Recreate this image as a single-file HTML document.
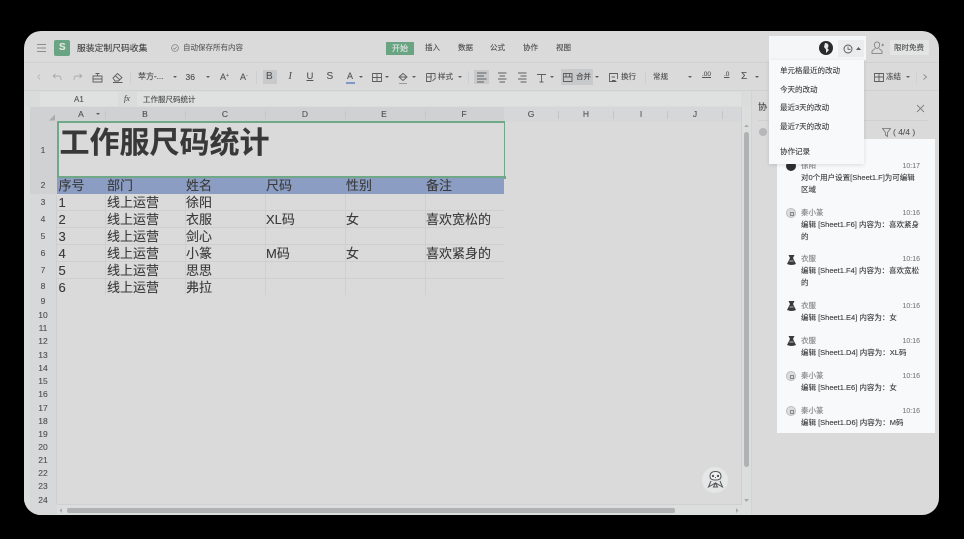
<!DOCTYPE html>
<html lang="zh">
<head>
<meta charset="utf-8">
<title>服装定制尺码收集</title>
<style>
html,body{margin:0;padding:0;background:#000;width:964px;height:539px;overflow:hidden}
body{font-family:"Liberation Sans","Noto Sans CJK SC",sans-serif;color:#444}
#root{position:absolute;left:0;top:0;width:964px;height:539px;filter:blur(.3px)}
.b{position:absolute}
.t{position:absolute;white-space:nowrap;line-height:1;-webkit-text-stroke:.12px currentColor}
.s8{font-size:7.5px;color:#4c4c4c}
.h{font-size:8.5px;color:#4f4f4f;transform:translateX(-50%)}
.r{font-size:8.5px;color:#4f4f4f;transform:translateX(-50%);left:43px}
.c{font-size:13px;color:#3a3a3a}
svg{position:absolute;overflow:visible}
.ic{fill:none;stroke:#5d5e60;stroke-width:.9}
.tri{position:absolute;width:0;height:0;border-left:2px solid transparent;border-right:2px solid transparent;border-top:2.5px solid #5d5e60}
.hl{position:absolute;left:57px;width:447px;height:1px;background:#cfcfcf}
.vl{position:absolute;top:194px;width:1px;height:101px;background:#cfcfcf}
.hs{position:absolute;top:111px;width:1px;height:8px;background:#c4c5c7}
.name{font-size:7.5px;color:#808080}
.time{font-size:7px;color:#808080;right:44px}
.desc{font-size:7.5px;color:#3a3a3a}
.qin{position:absolute;width:10px;height:10px;border-radius:50%;background:#dcdcdc;border:.5px solid #bdbdbd;box-sizing:border-box}
.qin:after{content:"";position:absolute;left:2.500px;top:2.500px;width:4px;height:4px;border:.5px solid #8a8a8a;box-sizing:border-box}
</style>
</head>
<body>
<div id="root">
<svg style="left:0;top:0" width="964" height="539">
<defs><clipPath id="w"><rect x="24" y="31" width="915" height="484" rx="17"/></clipPath></defs>
<g clip-path="url(#w)">
<rect x="24" y="31" width="915" height="484" fill="#dadada"/>
<rect x="24" y="62" width="915" height="1" fill="#d0d1d2"/>
<rect x="24" y="90" width="915" height="1" fill="#d0d1d2"/>
<rect x="24" y="91" width="728" height="16" fill="#dadbdb"/>
<rect x="24" y="107" width="33" height="408" fill="#d7d8d9"/>
<rect x="24" y="107" width="6" height="408" fill="#dcdddd"/>
<rect x="30" y="107" width="474" height="15" fill="#d0d1d3"/>
<rect x="504" y="107" width="237" height="15" fill="#d6d7d8"/>
<rect x="30" y="122" width="27" height="72" fill="#d0d1d3"/>
<rect x="57" y="504" width="695" height="11" fill="#dcdddd"/>
<rect x="741" y="107" width="11" height="408" fill="#dcdddd"/>
<rect x="741" y="107" width="1" height="397" fill="#cfd0d1"/>
<rect x="57" y="504" width="685" height="1" fill="#cfd0d1"/>
<rect x="751" y="91" width="1" height="424" fill="#d2d3d4"/>
<rect x="56" y="195" width="1" height="309" fill="#cdced0"/>
</g>
</svg>

<!-- Top bar -->
<svg style="left:37px;top:44px" width="10" height="9"><path d="M0 .5H9M0 4H9M0 7.5H9" stroke="#8b8c8e" stroke-width="1" fill="none"/></svg>
<div class="b" style="left:54px;top:40px;width:16px;height:16px;background:#6aa583;border-radius:2px"></div>
<div class="t" style="left:59px;top:43px;font-size:10px;font-weight:bold;color:#e4e6e4">S</div>
<div class="t" style="left:77px;top:43.500px;font-size:8.800px;color:#444">服装定制尺码收集</div>
<svg style="left:171px;top:44px" width="8" height="8"><circle cx="4" cy="4" r="3.400" fill="none" stroke="#858688" stroke-width=".8"/><path d="M2.300 4L3.600 5.200L5.800 2.900" fill="none" stroke="#858688" stroke-width=".8"/></svg>
<div class="t s8" style="left:183px;top:44px;color:#5e5e5e">自动保存所有内容</div>
<div class="b" style="left:386px;top:42px;width:28px;height:13px;background:#6aa583"></div>
<div class="t" style="left:392px;top:44.500px;font-size:8px;color:#e6e6e6">开始</div>
<div class="t s8" style="left:425px;top:44px">插入</div>
<div class="t s8" style="left:458px;top:44px">数据</div>
<div class="t s8" style="left:490px;top:44px">公式</div>
<div class="t s8" style="left:523px;top:44px">协作</div>
<div class="t s8" style="left:556px;top:44px">视图</div>

<!-- Toolbar highlights -->
<div class="b" style="left:263px;top:70px;width:14px;height:14px;background:#c8c9cb"></div>
<div class="b" style="left:474px;top:70px;width:15px;height:14px;background:#c8c9cb"></div>
<div class="b" style="left:561px;top:69px;width:32px;height:16px;background:#c8c9cb"></div>

<!-- Toolbar -->
<svg style="left:0;top:0" width="964" height="120" class="ic">
<path d="M40 74.500L37.800 77L40 79.500" stroke="#b4b5b6"/>
<path d="M53 76L55.500 74M53 76L55.500 78M53 76H59Q61 76 61 80" stroke="#aaabad"/>
<path d="M82 76L79.500 74M82 76L79.500 78M82 76H76Q74 76 74 80" stroke="#aaabad"/>
<path d="M93 76H102V82H93ZM97.500 76V73.500M93 79H102M95.500 73.500H99.500"/>
<path d="M113 78L117.500 73.500L122 77.500L118.500 81H115ZM115 75.500L120 80M113 82.500H122.500"/>
<path d="M130.500 71V84M256.500 71V84M468.500 71V84M645.500 71V84" stroke="#cdced0"/>
<path d="M372.500 73.500H381.500V81.500H372.500ZM377 73.500V81.500M372.500 77.500H381.500"/>
<path d="M399 77L403 73.500L407 77L403 80.500ZM399 77H407"/>
<rect x="399" y="83" width="8" height="1" fill="#9a9b9d" stroke="none"/>
<path d="M426.500 73.500H435V77M426.500 73.500V81.500H431M426.500 77H432M431 73.500V81.500M432.500 81L436 77.500"/>
<path d="M477 73H486.500M477 76H484M477 79H486.500M477 82H484"/>
<path d="M498 73H506.500M499.500 76H505M498 79H506.500M499.500 82H505"/>
<path d="M518 73H526.500M520.500 76H526.500M518 79H526.500M520.500 82H526.500"/>
<path d="M537 74.500H546M541.500 74.500V82M539.500 82H543.500"/>
<path d="M563.500 73.500H572V81.500H563.500ZM563.500 77H572M566 73.500V77M569.500 73.500V77"/>
<path d="M616.500 81.500H609.500V73.500H617.500V79M611.500 77H615M612 80.500H615.500"/>
<path d="M874.500 73.500H883.500V81.500H874.500ZM874.500 77H883.500M879 73.500V81.500"/>
<path d="M923.500 74.500L926.500 77L923.500 79.500" stroke="#8b8c8e"/>
<path d="M916.500 71V84" stroke="#d0d1d2"/>
</svg>
<div class="t" style="left:138px;top:73px;font-size:8px;color:#4c4c4c">苹方-...</div><div class="tri" style="left:173px;top:76px"></div>
<div class="t" style="left:185.500px;top:73px;font-size:8.500px;color:#4c4c4c">36</div><div class="tri" style="left:206px;top:76px"></div>
<div class="t" style="left:220px;top:72.500px;font-size:9px;color:#555">A<span style="font-size:5px;vertical-align:3px">+</span></div>
<div class="t" style="left:240px;top:72.500px;font-size:9px;color:#555">A<span style="font-size:5px;vertical-align:3px">-</span></div>
<div class="t" style="left:266px;top:72px;font-size:10px;color:#555">B</div>
<div class="t" style="left:288.500px;top:72px;font-size:10px;color:#555;font-family:'Liberation Serif',serif;font-style:italic">I</div>
<div class="t" style="left:306.500px;top:72px;font-size:9.500px;color:#555;text-decoration:underline">U</div>
<div class="t" style="left:326.500px;top:72px;font-size:10px;color:#555">S</div>
<div class="t" style="left:347px;top:71.500px;font-size:9px;color:#555">A</div>
<div class="b" style="left:346px;top:82px;width:9px;height:1.500px;background:#7f96c6"></div>
<div class="tri" style="left:359px;top:76px"></div><div class="tri" style="left:385px;top:76px"></div><div class="tri" style="left:412px;top:76px"></div>
<div class="t s8" style="left:438px;top:73px">样式</div><div class="tri" style="left:458px;top:76px"></div>
<div class="tri" style="left:550px;top:76px"></div>
<div class="t s8" style="left:576px;top:73px;color:#444">合并</div><div class="tri" style="left:595px;top:76px"></div>
<div class="t s8" style="left:621px;top:73px">换行</div>
<div class="t s8" style="left:653px;top:73px">常规</div><div class="tri" style="left:688px;top:76px"></div>
<div class="t" style="left:702px;top:72px;font-size:6.500px;color:#555;text-decoration:underline">.00</div>
<div class="t" style="left:724px;top:72px;font-size:6.500px;color:#555;text-decoration:underline">.0</div>
<div class="t" style="left:741px;top:72px;font-size:10px;color:#555">Σ</div><div class="tri" style="left:755px;top:76px"></div>
<div class="t s8" style="left:886px;top:73px">冻结</div><div class="tri" style="left:906px;top:76px"></div>

<!-- Formula bar -->
<div class="b" style="left:40px;top:92px;width:78px;height:14px;background:#dfe0e0"></div>
<div class="t" style="left:74px;top:95.500px;font-size:8px;color:#555">A1</div>
<div class="t" style="left:124px;top:95px;font-size:8px;color:#555;font-family:'Liberation Serif',serif;font-style:italic">fx</div>
<div class="b" style="left:137px;top:92px;width:604px;height:14px;background:#dfe0e0"></div>
<div class="t s8" style="left:143px;top:95.500px">工作服尺码统计</div>

<!-- Column headers -->
<svg style="left:49px;top:114px" width="7" height="7"><path d="M0 6.500L6 .5V6.500Z" fill="#a9aaac"/></svg>
<div class="hs" style="left:105px"></div><div class="hs" style="left:185px"></div><div class="hs" style="left:265px"></div><div class="hs" style="left:345px"></div><div class="hs" style="left:425px"></div><div class="hs" style="left:558px"></div><div class="hs" style="left:613px"></div><div class="hs" style="left:667px"></div><div class="hs" style="left:722px"></div>
<div class="t h" style="left:81px;top:110px">A</div><div class="tri" style="left:96px;top:113px"></div>
<div class="t h" style="left:145px;top:110px">B</div>
<div class="t h" style="left:225px;top:110px">C</div>
<div class="t h" style="left:305px;top:110px">D</div>
<div class="t h" style="left:384px;top:110px">E</div>
<div class="t h" style="left:464px;top:110px">F</div>
<div class="t h" style="left:531px;top:110px">G</div>
<div class="t h" style="left:586px;top:110px">H</div>
<div class="t h" style="left:641px;top:110px">I</div>
<div class="t h" style="left:695px;top:110px">J</div>

<!-- Row headers -->
<div class="t r" style="top:146px">1</div><div class="t r" style="top:181px">2</div><div class="t r" style="top:197.500px">3</div>
<div class="t r" style="top:214.500px">4</div><div class="t r" style="top:231.500px">5</div><div class="t r" style="top:248.500px">6</div>
<div class="t r" style="top:265.500px">7</div><div class="t r" style="top:282px">8</div><div class="t r" style="top:297px">9</div>
<div class="t r" style="top:311px">10</div><div class="t r" style="top:324px">11</div><div class="t r" style="top:337px">12</div>
<div class="t r" style="top:351px">13</div><div class="t r" style="top:364px">14</div><div class="t r" style="top:377px">15</div>
<div class="t r" style="top:390px">16</div><div class="t r" style="top:404px">17</div><div class="t r" style="top:417px">18</div>
<div class="t r" style="top:430px">19</div><div class="t r" style="top:443px">20</div><div class="t r" style="top:456px">21</div>
<div class="t r" style="top:469px">22</div><div class="t r" style="top:482px">23</div><div class="t r" style="top:496px">24</div>

<!-- Grid -->
<div class="b" style="left:57px;top:178px;width:447px;height:16px;background:#8b9dc3"></div>
<div class="hl" style="top:210px"></div><div class="hl" style="top:227px"></div><div class="hl" style="top:244px"></div><div class="hl" style="top:261px"></div><div class="hl" style="top:278px"></div>
<div class="vl" style="left:105px"></div><div class="vl" style="left:185px"></div><div class="vl" style="left:265px"></div><div class="vl" style="left:345px"></div><div class="vl" style="left:425px"></div>
<div class="b" style="left:57px;top:121px;width:445px;height:53px;border:2px solid #6fa988;border-right-width:1.500px"></div>
<div class="b" style="left:503px;top:175.500px;width:3px;height:3px;background:#6fa988"></div>
<div class="t" style="left:59.500px;top:129px;font-size:30px;font-weight:bold;color:#383838">工作服尺码统计</div>

<div class="t c" style="left:58.500px;top:179px">序号</div><div class="t c" style="left:107px;top:179px">部门</div><div class="t c" style="left:186px;top:179px">姓名</div><div class="t c" style="left:266px;top:179px">尺码</div><div class="t c" style="left:346px;top:179px">性别</div><div class="t c" style="left:426px;top:179px">备注</div>
<div class="t c" style="left:58.500px;top:195.500px">1</div><div class="t c" style="left:107px;top:195.500px">线上运营</div><div class="t c" style="left:186px;top:195.500px">徐阳</div>
<div class="t c" style="left:58.500px;top:212.500px">2</div><div class="t c" style="left:107px;top:212.500px">线上运营</div><div class="t c" style="left:186px;top:212.500px">衣服</div><div class="t c" style="left:266px;top:212.500px">XL码</div><div class="t c" style="left:346px;top:212.500px">女</div><div class="t c" style="left:426px;top:212.500px">喜欢宽松的</div>
<div class="t c" style="left:58.500px;top:229.500px">3</div><div class="t c" style="left:107px;top:229.500px">线上运营</div><div class="t c" style="left:186px;top:229.500px">剑心</div>
<div class="t c" style="left:58.500px;top:246.500px">4</div><div class="t c" style="left:107px;top:246.500px">线上运营</div><div class="t c" style="left:186px;top:246.500px">小篆</div><div class="t c" style="left:266px;top:246.500px">M码</div><div class="t c" style="left:346px;top:246.500px">女</div><div class="t c" style="left:426px;top:246.500px">喜欢紧身的</div>
<div class="t c" style="left:58.500px;top:263.500px">5</div><div class="t c" style="left:107px;top:263.500px">线上运营</div><div class="t c" style="left:186px;top:263.500px">思思</div>
<div class="t c" style="left:58.500px;top:280.500px">6</div><div class="t c" style="left:107px;top:280.500px">线上运营</div><div class="t c" style="left:186px;top:280.500px">弗拉</div>

<!-- Scrollbars -->
<div class="b" style="left:744px;top:132px;width:5px;height:335px;background:#b0b1b3;border-radius:2.500px"></div>
<div class="b" style="left:67px;top:508px;width:608px;height:4.500px;background:#b0b1b3;border-radius:2px"></div>
<svg style="left:0;top:0" width="964" height="539"><path d="M744 127L746.500 124.500L749 127ZM744 499H749L746.500 502ZM62 508L59.500 510.500L62 513ZM736 508L738.500 510.500L736 513Z" fill="#a9aaac"/></svg>

<!-- Mascot -->
<div class="b" style="left:702px;top:467px;width:26px;height:26px;border-radius:50%;background:#e5e6e6"></div>
<svg style="left:707px;top:470px" width="17" height="20" fill="none" stroke="#55565a" stroke-width="1">
<path d="M3 6.500Q3 1.500 8.500 1.500Q14 1.500 14 6.500Q14 10 8.500 10Q3 10 3 6.500Z" fill="#f2f2f2"/>
<path d="M4 11L1.500 17L8.500 13L15.500 17L13 11M8.500 13L6.500 17H10.500Z"/>
<circle cx="6" cy="6" r=".7" fill="#55565a"/><circle cx="11" cy="6" r=".7" fill="#55565a"/><path d="M8 7.500H9"/>
</svg>

<!-- Side panel -->
<div class="t" style="left:758px;top:103px;font-size:9px;color:#444">协</div>
<svg style="left:916px;top:104px" width="9" height="9"><path d="M1 1L8 8M8 1L1 8" stroke="#808183" stroke-width=".9"/></svg>
<div class="b" style="left:758px;top:119.500px;width:170px;height:1px;background:#cfd0d1"></div>
<div class="b" style="left:759px;top:128px;width:8px;height:8px;border-radius:50%;background:#b5b6b8"></div>
<svg style="left:882px;top:128px" width="9" height="9"><path d="M.5 .5H8.500L5.500 4.500V8.500L3.500 7V4.500Z" fill="none" stroke="#707173" stroke-width=".8"/></svg>
<div class="t" style="left:893px;top:128px;font-size:8.500px;color:#555">( 4/4 )</div>

<div class="b" style="left:777px;top:139px;width:158px;height:294px;background:#f8f9fb"></div>
<div class="t name" style="left:801px;top:162px">徐阳</div><div class="t time" style="top:162.500px">10:17</div>
<div class="t desc" style="left:801px;top:174px">对0个用户设置[Sheet1.F]为可编辑</div><div class="t desc" style="left:801px;top:186px">区域</div>
<div class="b" style="left:786px;top:161px;width:10px;height:10px;border-radius:50%;background:#2e2e2e"></div>

<div class="qin" style="left:786px;top:208px"></div>
<div class="t name" style="left:801px;top:209px">秦小篆</div><div class="t time" style="top:209.500px">10:16</div>
<div class="t desc" style="left:801px;top:221px">编辑 [Sheet1.F6] 内容为：喜欢紧身</div><div class="t desc" style="left:801px;top:233px">的</div>

<svg style="left:787px;top:255px" width="9" height="10"><path d="M1.500 0H7.500L6 3L9 9Q4.500 11 0 9L3 3Z" fill="#3a3a3a"/><path d="M2.500 6H6.500" stroke="#ddd" stroke-width=".8"/></svg>
<div class="t name" style="left:801px;top:255px">衣服</div><div class="t time" style="top:255.500px">10:16</div>
<div class="t desc" style="left:801px;top:267px">编辑 [Sheet1.F4] 内容为：喜欢宽松</div><div class="t desc" style="left:801px;top:279px">的</div>

<svg style="left:787px;top:301px" width="9" height="10"><path d="M1.500 0H7.500L6 3L9 9Q4.500 11 0 9L3 3Z" fill="#3a3a3a"/><path d="M2.500 6H6.500" stroke="#ddd" stroke-width=".8"/></svg>
<div class="t name" style="left:801px;top:302px">衣服</div><div class="t time" style="top:302.500px">10:16</div>
<div class="t desc" style="left:801px;top:314px">编辑 [Sheet1.E4] 内容为：女</div>

<svg style="left:787px;top:336px" width="9" height="10"><path d="M1.500 0H7.500L6 3L9 9Q4.500 11 0 9L3 3Z" fill="#3a3a3a"/><path d="M2.500 6H6.500" stroke="#ddd" stroke-width=".8"/></svg>
<div class="t name" style="left:801px;top:337px">衣服</div><div class="t time" style="top:337.500px">10:16</div>
<div class="t desc" style="left:801px;top:349px">编辑 [Sheet1.D4] 内容为：XL码</div>

<div class="qin" style="left:786px;top:371px"></div>
<div class="t name" style="left:801px;top:372px">秦小篆</div><div class="t time" style="top:372.500px">10:16</div>
<div class="t desc" style="left:801px;top:384px">编辑 [Sheet1.E6] 内容为：女</div>

<div class="qin" style="left:786px;top:406px"></div>
<div class="t name" style="left:801px;top:407px">秦小篆</div><div class="t time" style="top:407.500px">10:16</div>
<div class="t desc" style="left:801px;top:419px">编辑 [Sheet1.D6] 内容为：M码</div>

<!-- Top-right popup header & dropdown -->
<div class="b" style="left:769px;top:36px;width:97px;height:24px;background:#f5f6f8"></div>
<div class="b" style="left:819px;top:41px;width:14px;height:14px;border-radius:50%;background:#2a2a2a"></div>
<svg style="left:823px;top:43px" width="7" height="10"><path d="M2 0Q5.500 0 5.500 3L4.500 5.500L6 7L3 10V6.500L1 4Z" fill="#e6e6e6"/></svg>
<div class="b" style="left:838px;top:40px;width:26px;height:17px;background:#ebecee"></div>
<svg style="left:843px;top:43.500px" width="10" height="10"><circle cx="5" cy="5" r="4" fill="none" stroke="#555" stroke-width=".9"/><path d="M5 2.500V5.300H7.500" fill="none" stroke="#555" stroke-width=".8"/></svg>
<svg style="left:856px;top:47px" width="5" height="3"><path d="M0 3L2.500 0L5 3Z" fill="#5d5e60"/></svg>
<svg style="left:871px;top:41px" width="13" height="14" fill="none" stroke="#77787a" stroke-width=".8"><path d="M3.500 3.500Q3.500 1 6 1Q8.500 1 8.500 3.500Q8.500 7 6 7.500Q3.500 7 3.500 3.500ZM4 7.500L1 10V12.500H11V10L8 7.500M10.500 4H13M11.700 2.800V5.200"/></svg>
<div class="b" style="left:890px;top:40px;width:39px;height:15px;background:#e3e4e4;border-radius:1px"></div>
<div class="t s8" style="left:894px;top:44px">限时免费</div>

<div class="b" style="left:769px;top:60px;width:95px;height:104px;background:#f8f9fb;box-shadow:0 1px 4px rgba(0,0,0,.12)"></div>
<div class="t s8" style="left:780px;top:67px;color:#3f3f3f">单元格最近的改动</div>
<div class="t s8" style="left:780px;top:85.500px;color:#3f3f3f">今天的改动</div>
<div class="t s8" style="left:780px;top:104px;color:#3f3f3f">最近3天的改动</div>
<div class="t s8" style="left:780px;top:123px;color:#3f3f3f">最近7天的改动</div>
<div class="t s8" style="left:780px;top:147.500px;color:#3f3f3f">协作记录</div>
</div>
</body>
</html>
